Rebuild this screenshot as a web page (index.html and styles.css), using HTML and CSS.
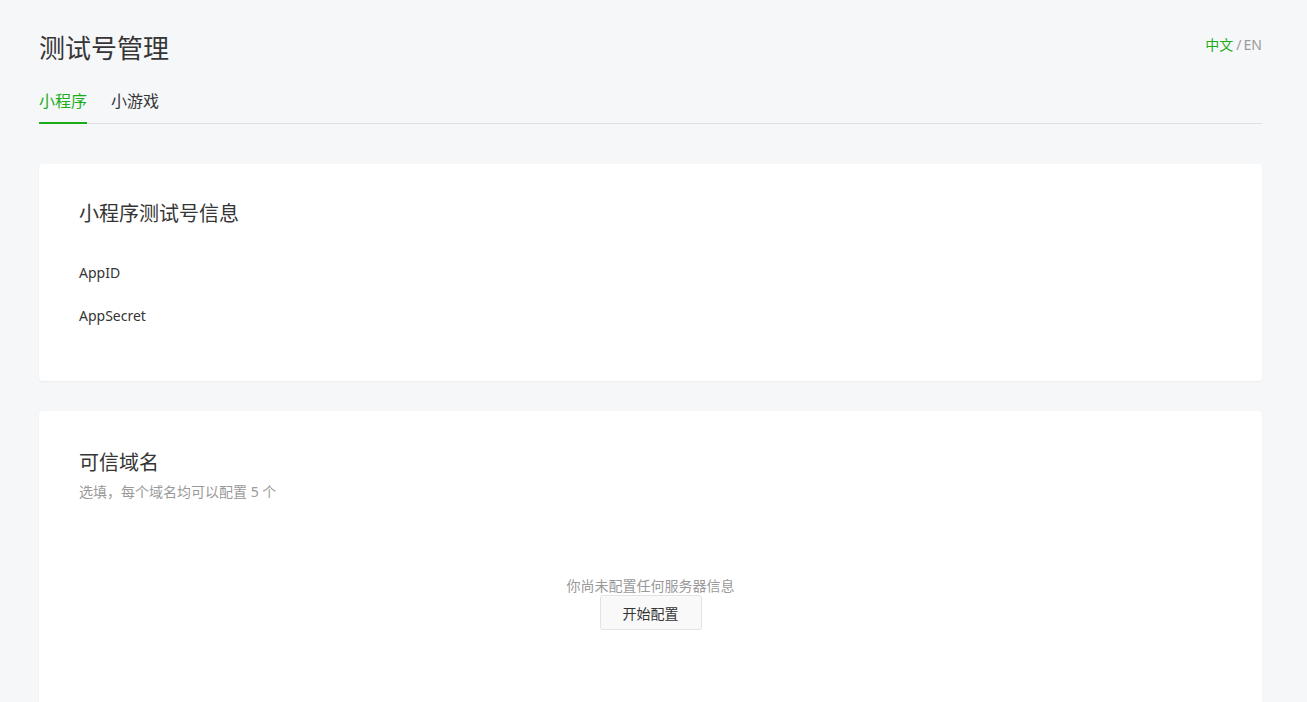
FILE: index.html
```html
<!DOCTYPE html>
<html lang="zh-CN">
<head>
  <meta charset="UTF-8">
  <title>测试号管理</title>
  <link rel="stylesheet" href="styles.css">
</head>
<body>
<div class="page">
  <div class="head">
    <h1 class="title">测试号管理</h1>
    <div class="lang"><span class="on">中文</span><span class="sep">/</span><span>EN</span></div>
  </div>

  <div class="tabs">
    <a class="tab active">小程序</a>
    <a class="tab">小游戏</a>
  </div>

  <div class="card">
    <h2 class="card-title">小程序测试号信息</h2>
    <div class="field">AppID</div>
    <div class="field">AppSecret</div>
  </div>

  <div class="card card-domain">
    <h2 class="card-title">可信域名</h2>
    <p class="tips">选填，每个域名均可以配置 5 个</p>
    <div class="empty">
      <p>你尚未配置任何服务器信息</p>
      <button class="btn">开始配置</button>
    </div>
  </div>
</div>
</body>
</html>
```

FILE: styles.css
```css
html, body { margin: 0; background: #f6f7f9; }
body { font-family: "Noto Sans", "Noto Sans CJK SC", sans-serif; color: #353535; }
.page { width: 1223px; margin-left: 39px; }
.head { display: flex; justify-content: space-between; align-items: flex-start; padding-top: 29px; }
.title { margin: 0; font-size: 26px; font-weight: 400; line-height: 38px; }
.lang { font-size: 14px; color: #9a9a9a; line-height: 20px; padding-top: 6px; }
.lang .on { color: #1aad19; }
.lang .sep { margin: 0 2px 0 3px; }
.tabs { display: flex; gap: 24px; margin-top: 23px; border-bottom: 1px solid #e0e0e0; }
.tab { font-size: 16px; line-height: 22px; padding-bottom: 10px; color: #353535; border-bottom: 2px solid transparent; margin-bottom: -1px; }
.tab.active { color: #1aad19; border-bottom-color: #1aad19; }
.card { background: #fff; border-radius: 4px; box-shadow: 0 1px 2px rgba(0,0,0,0.05); margin-top: 40px; padding: 36px 40px 55px; }
.card + .card { margin-top: 30px; }
.card-domain { height: 400px; padding-top: 38px; }
.card-title { margin: 0; font-size: 20px; font-weight: 400; line-height: 28px; }
.field { font-size: 14px; line-height: 20px; margin-top: 23px; }
.field:first-of-type { margin-top: 35px; }
.tips { margin: 5px 0 0; font-size: 14px; color: #9a9a9a; line-height: 20px; }
.empty { text-align: center; margin-top: 74px; }
.empty p { margin: 0; font-size: 14px; color: #9a9a9a; line-height: 20px; }
.btn { display: block; margin: -1px auto 0; width: 102px; height: 35px; box-sizing: border-box; border: 1px solid #e3e3e3; border-radius: 3px; background: #f9f9f9; font-family: inherit; font-size: 14px; color: #353535; }
```
